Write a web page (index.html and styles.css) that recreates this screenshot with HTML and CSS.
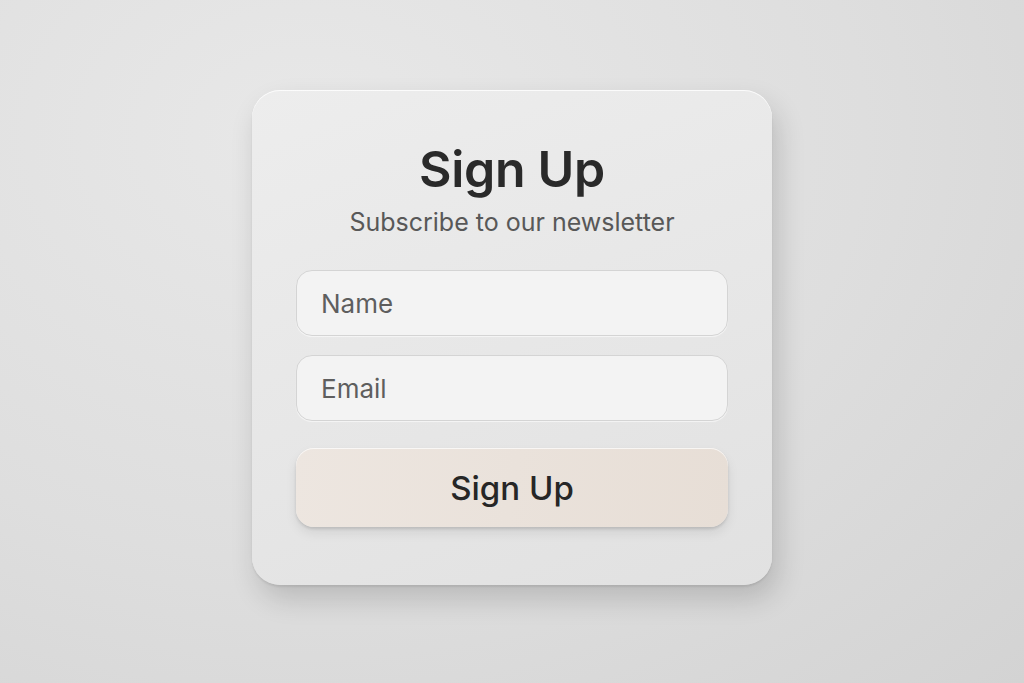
FILE: index.html
```html
<!DOCTYPE html>
<html lang="en">
<head>
    <meta charset="UTF-8">
    <meta name="viewport" content="width=device-width, initial-scale=1.0">
    <link rel="stylesheet" href="styles.css">
</head>
<body>
    <div class="signup-card">
        <h1 class="signup-title">Sign Up</h1>
        <p class="signup-subtitle">Subscribe to our newsletter</p>
        <form class="signup-form">
            <input class="signup-input" type="text" placeholder="Name">
            <input class="signup-input" type="email" placeholder="Email">
            <button class="signup-button" type="button">Sign Up</button>
        </form>
    </div>
</body>
</html>
```

FILE: styles.css
```css
html, body {
    height: 100%;
}

body {
    margin: 0;
    background: radial-gradient(ellipse at 30% 20%, #e8e8e8 0%, #dedede 55%, #d3d3d3 100%);
    font-family: Inter, "Noto Sans", sans-serif;
    display: flex;
    justify-content: center;
    align-items: flex-start;
}

.signup-card {
    margin-top: 90px;
    width: 520px;
    height: 495px;
    box-sizing: border-box;
    padding: 40px 44px 0;
    background: linear-gradient(160deg, #ededed 0%, #e6e6e6 60%, #e1e1e1 100%);
    border-radius: 28px;
    box-shadow: inset 0 1px 0 rgba(255, 255, 255, 0.8),
                0 2px 2px rgba(0, 0, 0, 0.08),
                6px 14px 28px rgba(0, 0, 0, 0.16);
    text-align: center;
}

.signup-title {
    margin: 0;
    font-size: 50px;
    font-weight: 600;
    line-height: 78px;
    color: #2a2a2a;
    letter-spacing: -0.3px;
}

.signup-subtitle {
    margin: 0 0 34px;
    font-size: 25px;
    line-height: 28px;
    color: #585858;
}

.signup-form {
    display: flex;
    flex-direction: column;
}

.signup-input {
    height: 66px;
    box-sizing: border-box;
    margin-bottom: 19px;
    padding: 0 24px;
    border: 1px solid #d4d4d4;
    border-radius: 16px;
    background: #f3f3f3;
    font-family: inherit;
    font-size: 26px;
    color: #333;
    outline: none;
    box-shadow: 0 1px 1px rgba(255, 255, 255, 0.6);
}

.signup-input::placeholder {
    color: #5e5e5e;
}

.signup-button {
    margin-top: 8px;
    height: 79px;
    border: none;
    border-radius: 18px;
    background: linear-gradient(100deg, #ede6e0 0%, #e7ded6 100%);
    box-shadow: inset 0 1px 0 rgba(255, 255, 255, 0.7),
                0 2px 3px rgba(0, 0, 0, 0.12),
                0 6px 12px rgba(0, 0, 0, 0.08);
    font-family: inherit;
    font-size: 33px;
    font-weight: 500;
    color: #262626;
    cursor: pointer;
}
```
